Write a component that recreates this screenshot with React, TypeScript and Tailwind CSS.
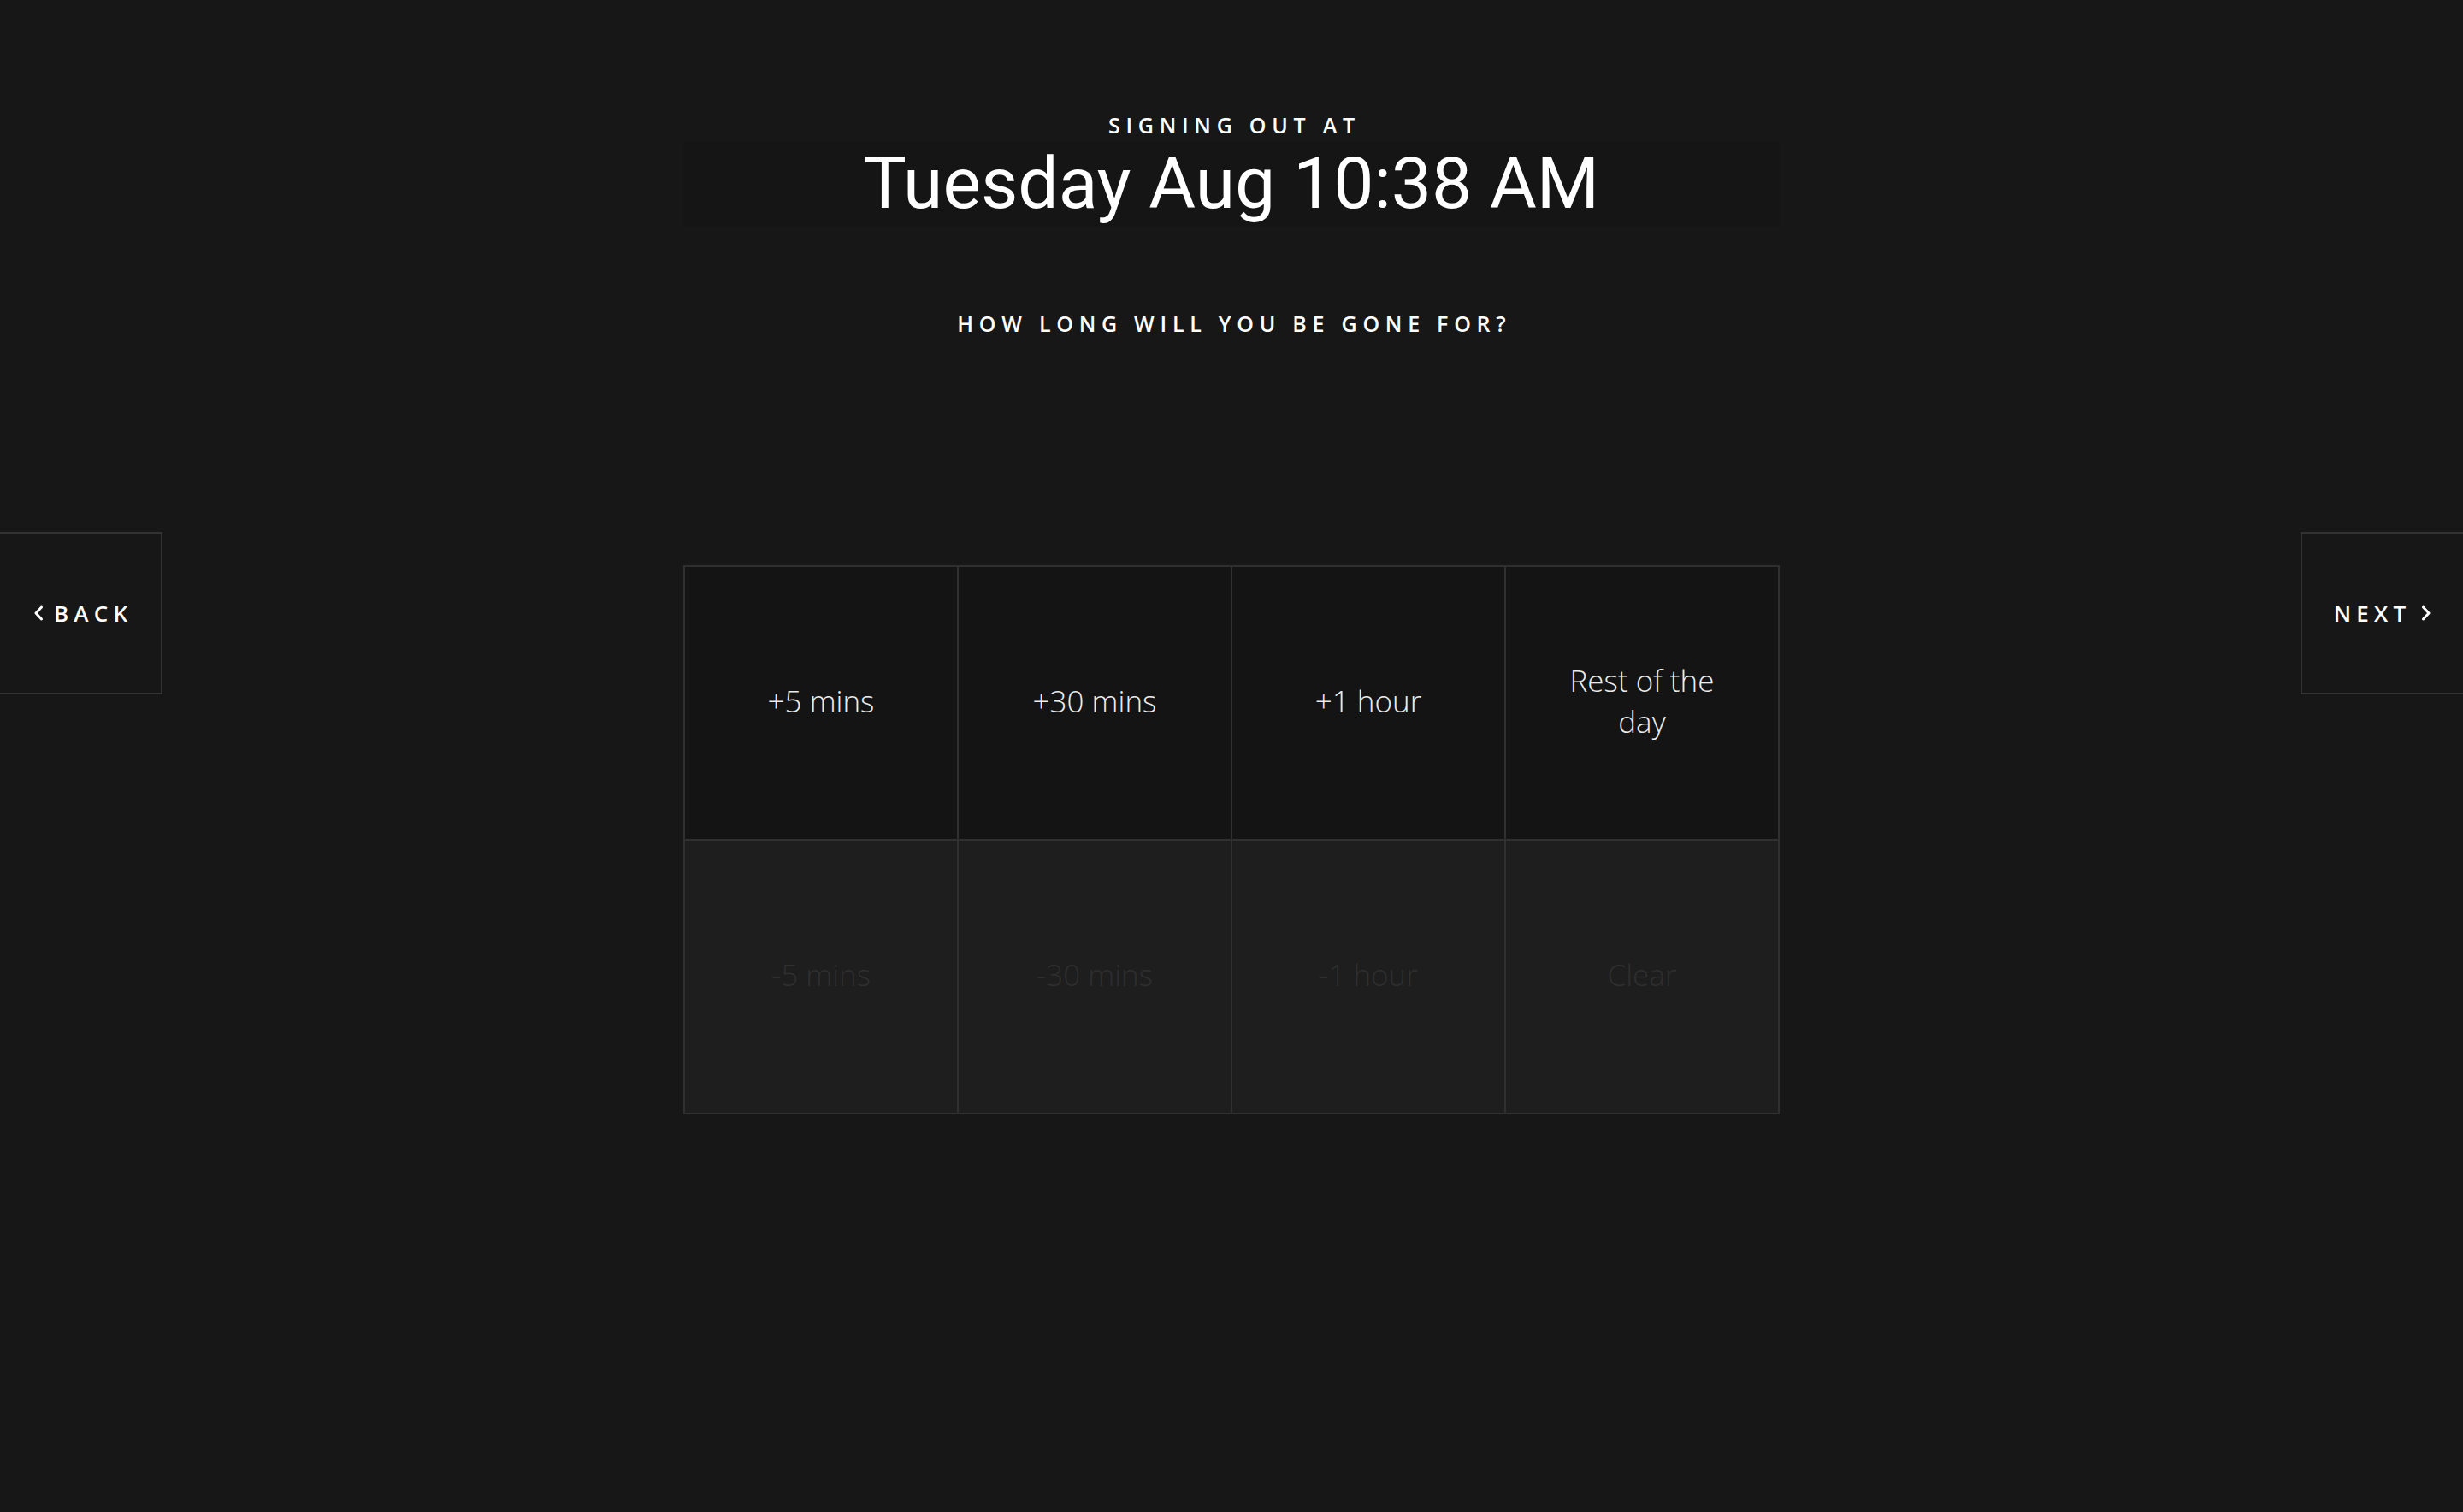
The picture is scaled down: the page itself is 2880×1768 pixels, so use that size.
const label = "font-['Open_Sans',sans-serif] font-semibold uppercase text-white";

const plusOptions = ["+5 mins", "+30 mins", "+1 hour", "Rest of the day"];
const minusOptions = ["-5 mins", "-30 mins", "-1 hour", "Clear"];

function Chevron({ dir }: { dir: "left" | "right" }) {
  return (
    <svg width="12" height="18" viewBox="0 0 12 18" fill="none" className="shrink-0">
      <polyline
        points={dir === "left" ? "9.5,2 3,9 9.5,16" : "2.5,2 9,9 2.5,16"}
        stroke="white"
        strokeWidth="3"
        strokeLinecap="round"
        strokeLinejoin="round"
      />
    </svg>
  );
}

function Cell({ text, muted }: { text: string; muted?: boolean }) {
  return (
    <button
      type="button"
      className={
        "flex h-[320px] items-center justify-center border-b-2 border-r-2 border-[#303030] px-[62px] pb-[4px] text-center font-['Open_Sans',sans-serif] text-[35px] font-light leading-[48px] " +
        (muted ? "bg-[#1e1e1e] text-[#2f2f2f]" : "bg-[#141414] text-[#ececec]")
      }
    >
      {text}
    </button>
  );
}

export default function App() {
  return (
    <div className="min-h-[1768px] w-full bg-[#171717]">
      <header className="flex flex-col items-center pt-[130px]">
        <p className={`${label} pl-[0.27em] text-[25px] leading-[32px] tracking-[0.27em]`}>Signing out at</p>
        <h1 className="mt-[3px] w-[1282px] bg-[#151515] text-center font-['Roboto',sans-serif] text-[84px] font-normal leading-[100px] text-white">
          Tuesday Aug 10:38 AM
        </h1>
        <p className={`${label} mt-[97px] pl-[0.27em] text-[25px] leading-[32px] tracking-[0.27em]`}>
          How long will you be gone for?
        </p>
      </header>

      <div className="mt-[228px] flex items-start justify-between">
        <button
          type="button"
          className={`flex h-[190px] w-[190px] items-center justify-center gap-[12px] border-2 border-l-0 border-[#333333] bg-[#171717] ${label} text-[26px] tracking-[0.24em]`}
        >
          <Chevron dir="left" />
          <span className="-mr-[0.24em]">Back</span>
        </button>

        <div className="mt-[39px] grid w-[1282px] grid-cols-4 border-l-2 border-t-2 border-[#303030]">
          {plusOptions.map((t) => (
            <Cell key={t} text={t} />
          ))}
          {minusOptions.map((t) => (
            <Cell key={t} text={t} muted />
          ))}
        </div>

        <button
          type="button"
          className={`flex h-[190px] w-[190px] items-center justify-center gap-[12px] border-2 border-r-0 border-[#333333] bg-[#171717] ${label} text-[26px] tracking-[0.24em]`}
        >
          <span>Next</span>
          <Chevron dir="right" />
        </button>
      </div>
    </div>
  );
}
